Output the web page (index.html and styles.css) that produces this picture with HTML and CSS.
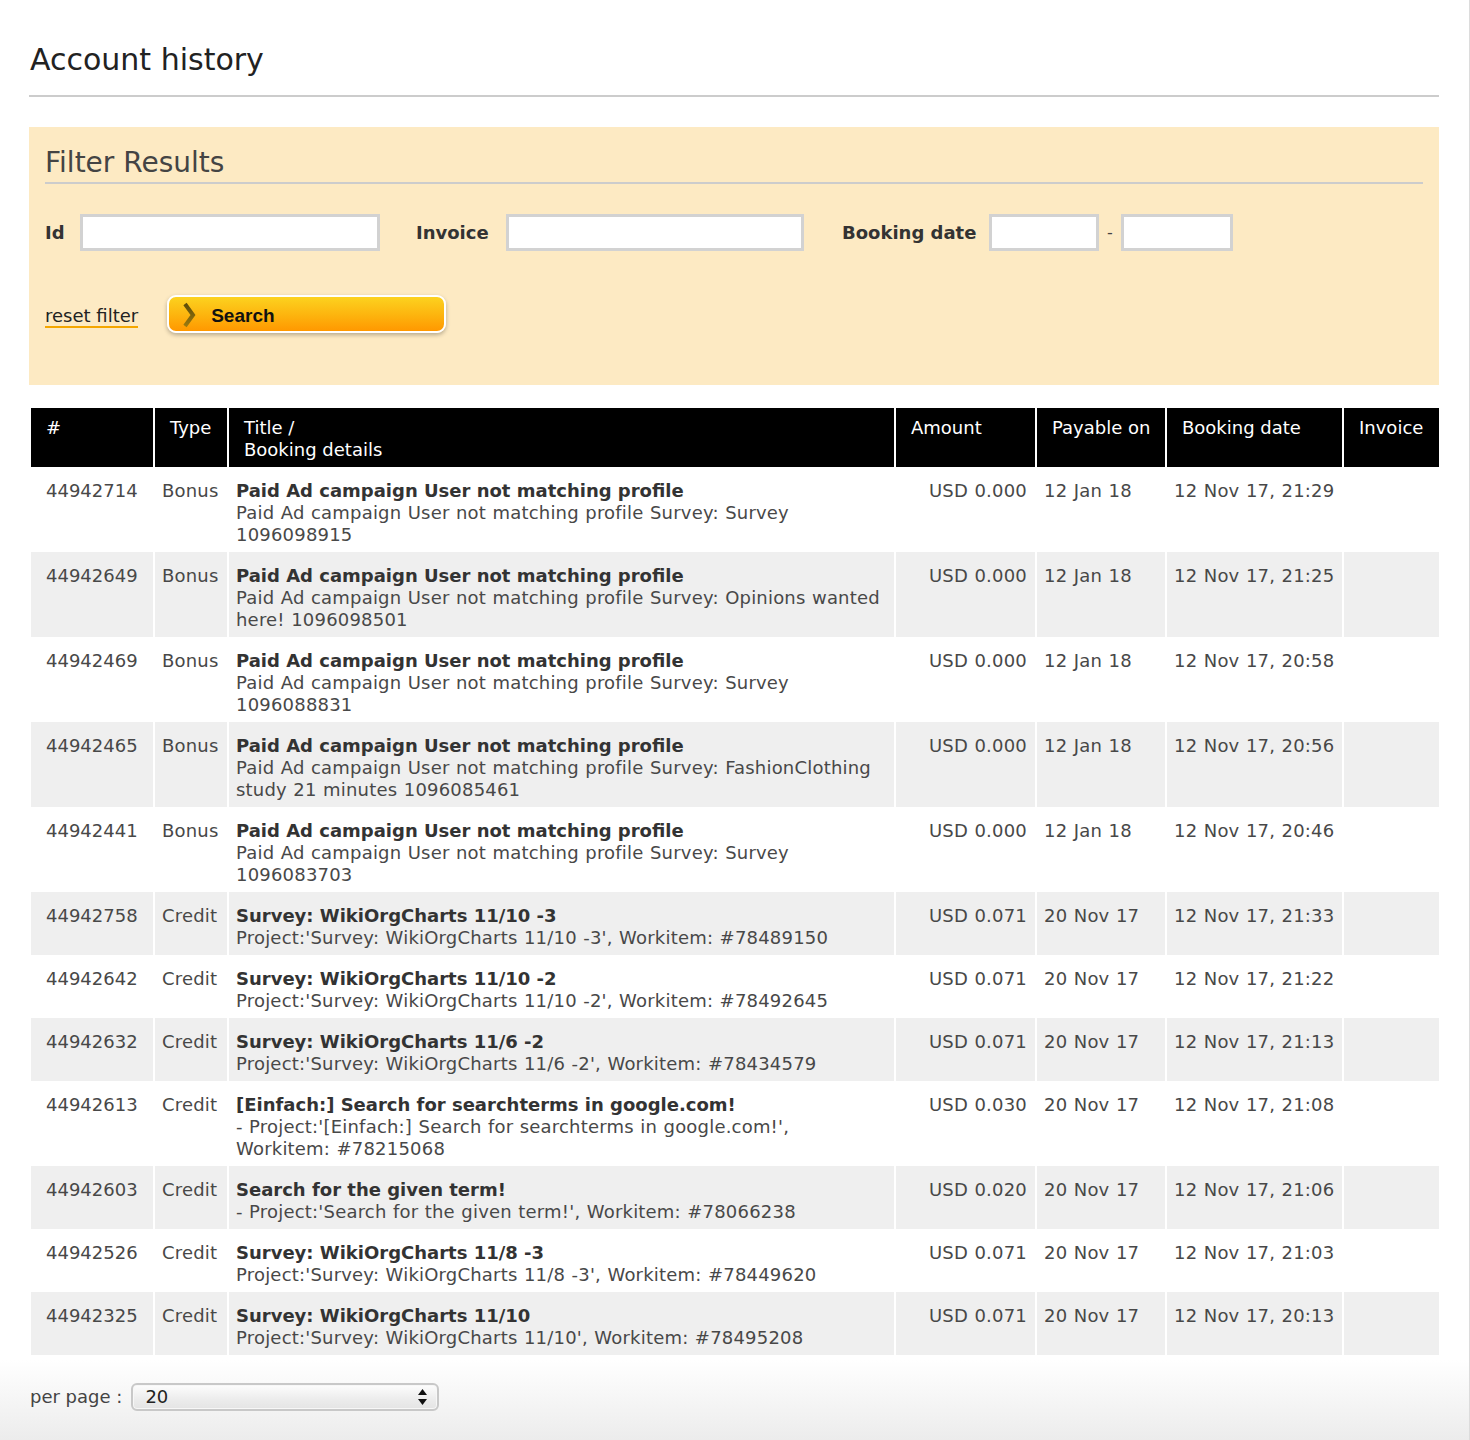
FILE: index.html
```html
<!DOCTYPE html>
<html lang="en">
<head>
<meta charset="utf-8">
<title>Account history</title>
<link rel="stylesheet" href="styles.css">
</head>
<body>
<div class="page">
  <h1 class="page-title">Account history</h1>

  <form class="filter">
    <h2 class="filter-title">Filter Results</h2>
    <div class="filter-fields">
      <label class="lbl lbl-id">Id</label>
      <input class="inp inp-id" type="text">
      <label class="lbl lbl-invoice">Invoice</label>
      <input class="inp inp-invoice" type="text">
      <label class="lbl lbl-date">Booking date</label>
      <input class="inp inp-date" type="text">
      <span class="dash">-</span>
      <input class="inp inp-date2" type="text">
    </div>
    <div class="filter-actions">
      <a class="reset" href="#">reset filter</a>
      <button class="search-btn" type="button">
        <svg class="chev" width="14" height="26" viewBox="0 0 14 26"><defs><linearGradient id="cg" x1="0" y1="0" x2="0" y2="1"><stop offset="0" stop-color="#5e4c08"/><stop offset="1" stop-color="#9a7a10"/></linearGradient></defs><path d="M3 2 L11 13 L3 24" fill="none" stroke="url(#cg)" stroke-width="4" stroke-linejoin="miter"/></svg>
        <span class="search-label">Search</span>
      </button>
    </div>
  </form>

  <table class="history">
    <thead>
      <tr>
        <th class="c-id">#</th>
        <th class="c-type">Type</th>
        <th class="c-title">Title /<br>Booking details</th>
        <th class="c-amount">Amount</th>
        <th class="c-pay">Payable on</th>
        <th class="c-book">Booking date</th>
        <th class="c-inv">Invoice</th>
      </tr>
    </thead>
    <tbody>
      <tr>
        <td class="id">44942714</td><td>Bonus</td>
        <td class="title"><b>Paid Ad campaign User not matching profile</b><br>Paid Ad campaign User not matching profile Survey: Survey 1096098915</td>
        <td class="amt">USD 0.000</td><td>12 Jan 18</td><td>12 Nov 17, 21:29</td><td></td>
      </tr>
      <tr>
        <td class="id">44942649</td><td>Bonus</td>
        <td class="title"><b>Paid Ad campaign User not matching profile</b><br>Paid Ad campaign User not matching profile Survey: Opinions wanted here! 1096098501</td>
        <td class="amt">USD 0.000</td><td>12 Jan 18</td><td>12 Nov 17, 21:25</td><td></td>
      </tr>
      <tr>
        <td class="id">44942469</td><td>Bonus</td>
        <td class="title"><b>Paid Ad campaign User not matching profile</b><br>Paid Ad campaign User not matching profile Survey: Survey 1096088831</td>
        <td class="amt">USD 0.000</td><td>12 Jan 18</td><td>12 Nov 17, 20:58</td><td></td>
      </tr>
      <tr>
        <td class="id">44942465</td><td>Bonus</td>
        <td class="title"><b>Paid Ad campaign User not matching profile</b><br>Paid Ad campaign User not matching profile Survey: FashionClothing study 21 minutes 1096085461</td>
        <td class="amt">USD 0.000</td><td>12 Jan 18</td><td>12 Nov 17, 20:56</td><td></td>
      </tr>
      <tr>
        <td class="id">44942441</td><td>Bonus</td>
        <td class="title"><b>Paid Ad campaign User not matching profile</b><br>Paid Ad campaign User not matching profile Survey: Survey 1096083703</td>
        <td class="amt">USD 0.000</td><td>12 Jan 18</td><td>12 Nov 17, 20:46</td><td></td>
      </tr>
      <tr>
        <td class="id">44942758</td><td>Credit</td>
        <td class="title"><b>Survey: WikiOrgCharts 11/10 -3</b><br>Project:'Survey: WikiOrgCharts 11/10 -3', Workitem: #78489150</td>
        <td class="amt">USD 0.071</td><td>20 Nov 17</td><td>12 Nov 17, 21:33</td><td></td>
      </tr>
      <tr>
        <td class="id">44942642</td><td>Credit</td>
        <td class="title"><b>Survey: WikiOrgCharts 11/10 -2</b><br>Project:'Survey: WikiOrgCharts 11/10 -2', Workitem: #78492645</td>
        <td class="amt">USD 0.071</td><td>20 Nov 17</td><td>12 Nov 17, 21:22</td><td></td>
      </tr>
      <tr>
        <td class="id">44942632</td><td>Credit</td>
        <td class="title"><b>Survey: WikiOrgCharts 11/6 -2</b><br>Project:'Survey: WikiOrgCharts 11/6 -2', Workitem: #78434579</td>
        <td class="amt">USD 0.071</td><td>20 Nov 17</td><td>12 Nov 17, 21:13</td><td></td>
      </tr>
      <tr>
        <td class="id">44942613</td><td>Credit</td>
        <td class="title"><b>[Einfach:] Search for searchterms in google.com!</b><br>- Project:'[Einfach:] Search for searchterms in google.com!', Workitem: #78215068</td>
        <td class="amt">USD 0.030</td><td>20 Nov 17</td><td>12 Nov 17, 21:08</td><td></td>
      </tr>
      <tr>
        <td class="id">44942603</td><td>Credit</td>
        <td class="title"><b>Search for the given term!</b><br>- Project:'Search for the given term!', Workitem: #78066238</td>
        <td class="amt">USD 0.020</td><td>20 Nov 17</td><td>12 Nov 17, 21:06</td><td></td>
      </tr>
      <tr>
        <td class="id">44942526</td><td>Credit</td>
        <td class="title"><b>Survey: WikiOrgCharts 11/8 -3</b><br>Project:'Survey: WikiOrgCharts 11/8 -3', Workitem: #78449620</td>
        <td class="amt">USD 0.071</td><td>20 Nov 17</td><td>12 Nov 17, 21:03</td><td></td>
      </tr>
      <tr>
        <td class="id">44942325</td><td>Credit</td>
        <td class="title"><b>Survey: WikiOrgCharts 11/10</b><br>Project:'Survey: WikiOrgCharts 11/10', Workitem: #78495208</td>
        <td class="amt">USD 0.071</td><td>20 Nov 17</td><td>12 Nov 17, 20:13</td><td></td>
      </tr>
    </tbody>
  </table>

  <div class="pager">
    <span class="pager-label">per page :</span>
    <div class="fake-select">
      <span class="sel-value">20</span>
      <svg class="sel-arrows" width="9" height="17" viewBox="0 0 9 17"><path d="M4.5 0 L9 6 L0 6 Z" fill="#111"/><path d="M0 10 L9 10 L4.5 16 Z" fill="#111"/></svg>
    </div>
  </div>
</div>
</body>
</html>
```

FILE: styles.css
```css
html, body {
  margin: 0;
  padding: 0;
}

body {
  font-family: "DejaVu Sans", Verdana, sans-serif;
  font-size: 18px;
  line-height: 22px;
  color: #444;
  width: 1470px;
  min-height: 1440px;
  box-sizing: border-box;
  border-right: 1px solid #dcdcdc;
  background: linear-gradient(to bottom, #ffffff 0, #ffffff 1360px, #ececec 1440px);
  overflow: hidden;
}

.page {
  padding: 0 30px 0 29px;
}

.page-title {
  margin: 0;
  padding: 42px 0 17px 1px;
  font-size: 30px;
  line-height: 36px;
  font-weight: normal;
  color: #222;
  border-bottom: 2px solid #cccccc;
}

/* Filter box */
.filter {
  margin: 30px 0 0;
  background: #fdeac3;
  padding: 0 16px 52px;
}

.filter-title {
  margin: 0;
  padding: 19px 0 2px;
  font-size: 28px;
  line-height: 34px;
  font-weight: normal;
  color: #444;
  border-bottom: 2px solid #cccccc;
}

.filter-fields {
  margin-top: 30px;
  display: flex;
  align-items: center;
  height: 37px;
}

.lbl {
  flex: none;
  font-weight: bold;
  color: #333;
  font-size: 18px;
  white-space: nowrap;
}

.lbl-id { width: 35px; }
.lbl-invoice { width: 90px; margin-left: 36px; }
.lbl-date { width: 147px; margin-left: 38px; }

.inp {
  flex: none;
  box-sizing: border-box;
  height: 37px;
  border: 3px solid #d2d2d2;
  background: #fff;
  margin: 0;
  padding: 0 6px;
  font: inherit;
  outline: none;
}

.inp-id { width: 300px; }
.inp-invoice { width: 298px; }
.inp-date { width: 110px; }
.inp-date2 { width: 112px; }

.dash {
  flex: none;
  width: 22px;
  text-align: center;
  color: #444;
  font-size: 16px;
}

.filter-actions {
  margin-top: 44px;
  display: flex;
  align-items: center;
  height: 38px;
}

.reset {
  color: #222;
  text-decoration: none;
  border-bottom: 2px solid #f4a600;
  line-height: 20px;
  margin-top: 6px;
}

.search-btn {
  margin: 0 0 0 29px;
  width: 279px;
  height: 38px;
  box-sizing: border-box;
  border: 2px solid #ffffff;
  border-radius: 9px;
  background: linear-gradient(to bottom, #fcd21f 0%, #fdb60f 50%, #ff9800 100%);
  box-shadow: 0 2px 4px rgba(0, 0, 0, 0.28);
  display: flex;
  align-items: center;
  padding: 0 0 0 13px;
  cursor: pointer;
}

.chev {
  flex: none;
  display: block;
  margin-top: 2px;
}

.search-label {
  margin-left: 15px;
  padding-top: 4px;
  font-family: "Liberation Sans", Arial, sans-serif;
  font-weight: bold;
  font-size: 19px;
  color: #111;
}

/* Table */
.history {
  margin-top: 23px;
  width: 1410px;
  table-layout: fixed;
  border-collapse: separate;
  border-spacing: 0;
}

.history th,
.history td {
  box-sizing: border-box;
  border-left: 2px solid #ffffff;
  vertical-align: top;
  text-align: left;
}

.history th {
  background: #000;
  color: #fff;
  font-weight: normal;
  padding: 9px 6px 6px 15px;
}

.c-id { width: 124px; }
.c-type { width: 74px; }
.c-title { width: 667px; }
.c-amount { width: 141px; }
.c-pay { width: 130px; }
.c-book { width: 177px; }
.c-inv { width: 97px; }

.history td {
  padding: 13px 7px 6px 7px;
  color: #484848;
  letter-spacing: 0.2px;
  word-spacing: 0.5px;
}

.history td.title {
  padding-right: 10px;
}

.history td b {
  color: #333;
  letter-spacing: 0;
  word-spacing: 0;
}

.history td.id {
  padding-left: 15px;
  letter-spacing: 0;
}

.history td.amt {
  text-align: right;
  padding-right: 8px;
}

.history tbody tr:nth-child(even) td {
  background: #efefef;
}

/* Pager */
.pager {
  margin-top: 28px;
  display: flex;
  align-items: center;
  height: 28px;
}

.pager-label {
  color: #444;
  margin-left: 1px;
}

.fake-select {
  margin-left: 9px;
  width: 308px;
  height: 28px;
  box-sizing: border-box;
  border: 2px solid #c8c8c8;
  border-radius: 6px;
  background: linear-gradient(to bottom, #fdfdfd 0%, #ececec 60%, #e4e4e4 100%);
  box-shadow: inset 0 0 0 1px #f7f7f7;
  display: flex;
  align-items: center;
  justify-content: space-between;
  padding: 0 10px 0 12px;
}

.sel-value {
  color: #222;
  font-size: 18px;
}

.sel-arrows {
  display: block;
}
```
